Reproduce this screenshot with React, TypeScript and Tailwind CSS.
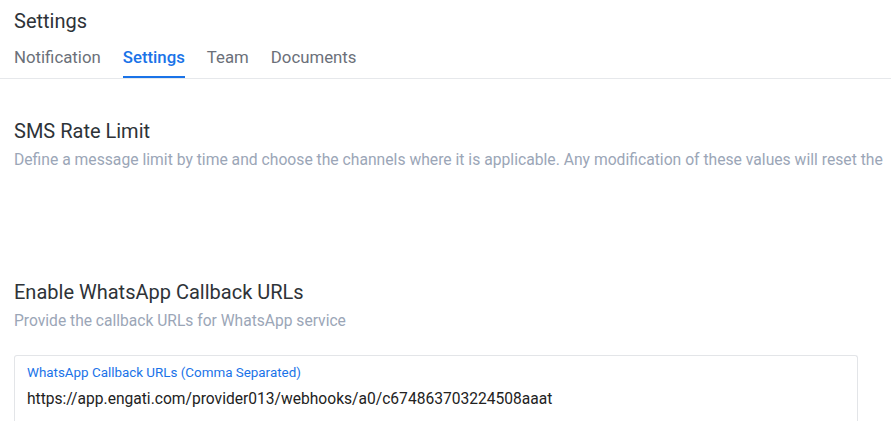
import React from "react";

const tabs = ["Notification", "Settings", "Team", "Documents"];

export default function App() {
  return (
    <div className="min-h-screen bg-white font-['Roboto',sans-serif] text-[#2e3338]">
      <div className="px-[14px] pt-[8px]">
        <h1 className="text-[20px] leading-[26px]">Settings</h1>
      </div>
      <nav className="mt-[13px] flex gap-[22px] border-b border-[#e6e8eb] px-[14px]">
        {tabs.map((tab) => (
          <div
            key={tab}
            className={`pb-[9px] text-[16.8px] leading-[20px] ${
              tab === "Settings"
                ? "border-b-2 border-[#1a73e8] font-medium text-[#1a73e8]"
                : "border-b-2 border-transparent text-[#6b7079]"
            }`}
          >
            {tab}
          </div>
        ))}
      </nav>

      <section className="px-[14px] pt-[39px]">
        <h2 className="text-[20px] leading-[26px]">SMS Rate Limit</h2>
        <p className="mt-[6px] whitespace-nowrap text-[15.7px] leading-[20px] text-[#9ba6b7]">
          Define a message limit by time and choose the channels where it is applicable. Any modification of these values will reset the
        </p>
      </section>

      <section className="px-[14px] pt-[109px]">
        <h2 className="text-[20px] leading-[26px]">Enable WhatsApp Callback URLs</h2>
        <p className="mt-[6px] text-[15.6px] leading-[20px] text-[#9ba6b7]">
          Provide the callback URLs for WhatsApp service
        </p>
        <div className="mt-[24px] h-[66px] w-[844px] rounded-t-[3px] border border-b-0 border-[#e3e5e8] px-[12px] pt-[9px]">
          <div className="text-[13.4px] leading-[16px] text-[#1a73e8]">
            WhatsApp Callback URLs (Comma Separated)
          </div>
          <div className="mt-[8px] text-[15.6px] leading-[20px] text-[#222]">
            https://app.engati.com/provider013/webhooks/a0/c674863703224508aaat
          </div>
        </div>
      </section>
    </div>
  );
}
